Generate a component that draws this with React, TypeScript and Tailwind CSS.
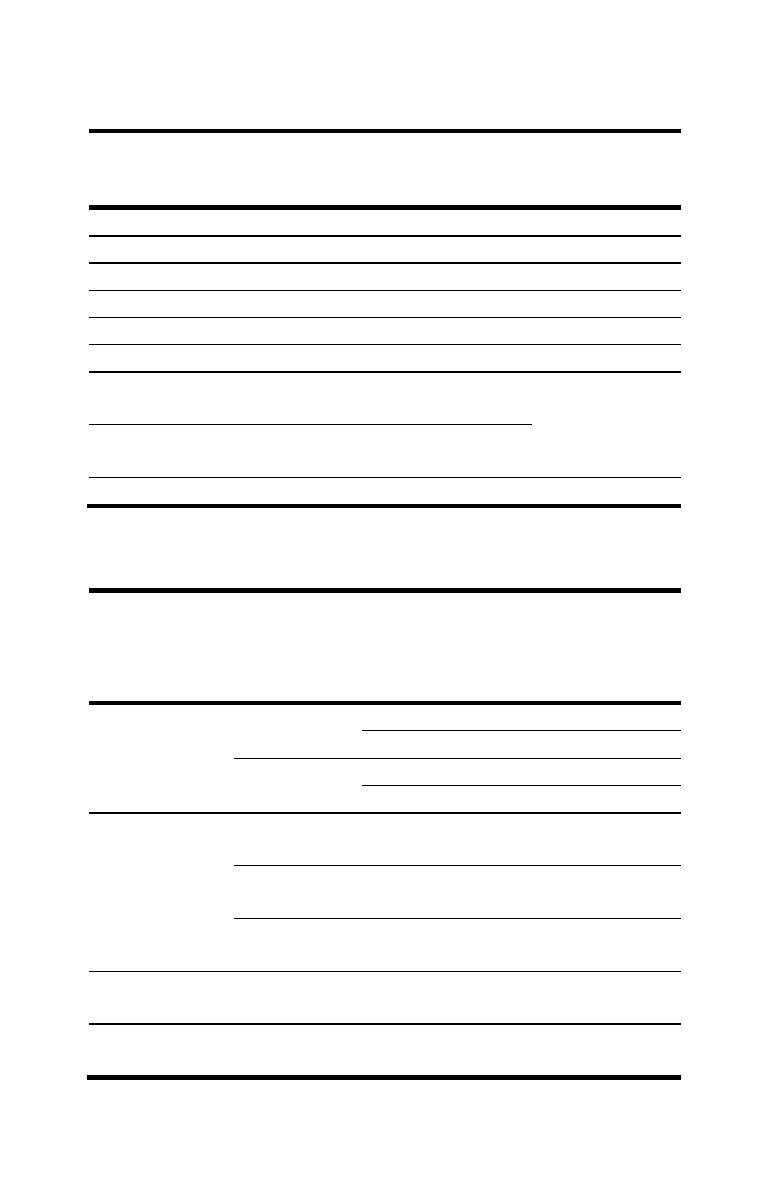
// Two booktabs-style tables; the page shows only their rules, no text.

type Rule = { className: string };

const full = 'w-[592px]';
const thickFull = '-ml-[2px] w-[594px]';

const firstTable: Rule[] = [
  { className: `mt-[129px] h-[4px] ${full}` },
  { className: `mt-[72px] h-[5px] ${full}` },
  { className: `mt-[25px] h-[2px] ${full}` },
  { className: `mt-[25px] h-[2px] ${full}` },
  { className: `mt-[26px] h-[1px] ${full}` },
  { className: `mt-[26px] h-[1px] ${full}` },
  { className: `mt-[26px] h-[1px] ${full}` },
  { className: `mt-[26px] h-[2px] ${full}` },
  { className: 'mt-[51px] h-[1px] w-[443px]' },
  { className: `mt-[52px] h-[1px] ${full}` },
  { className: `mt-[26px] h-[4px] ${thickFull}` },
];

const secondTable: Rule[] = [
  { className: `mt-[80px] h-[5px] ${full}` },
  { className: `mt-[108px] h-[4px] ${full}` },
  { className: 'mt-[25px] ml-[273px] h-[1px] w-[319px]' },
  { className: 'mt-[27px] ml-[145px] h-[1px] w-[447px]' },
  { className: 'mt-[26px] ml-[273px] h-[1px] w-[319px]' },
  { className: `mt-[26px] h-[2px] ${full}` },
  { className: 'mt-[51px] ml-[145px] h-[1px] w-[447px]' },
  { className: 'mt-[52px] ml-[145px] h-[1px] w-[447px]' },
  { className: `mt-[52px] h-[1px] ${full}` },
  { className: `mt-[51px] h-[2px] ${full}` },
  { className: `mt-[50px] h-[5px] ${thickFull}` },
];

function Rules({ rules }: { rules: Rule[] }) {
  return (
    <div className="flex flex-col">
      {rules.map((r, i) => (
        <div key={i} className={`shrink-0 bg-black ${r.className}`} />
      ))}
    </div>
  );
}

export default function App() {
  return (
    <div className="min-h-[1188px] w-[765px] bg-white font-['Liberation_Serif',serif]">
      <div className="ml-[89px] w-[592px]">
        <Rules rules={firstTable} />
        <Rules rules={secondTable} />
      </div>
    </div>
  );
}
